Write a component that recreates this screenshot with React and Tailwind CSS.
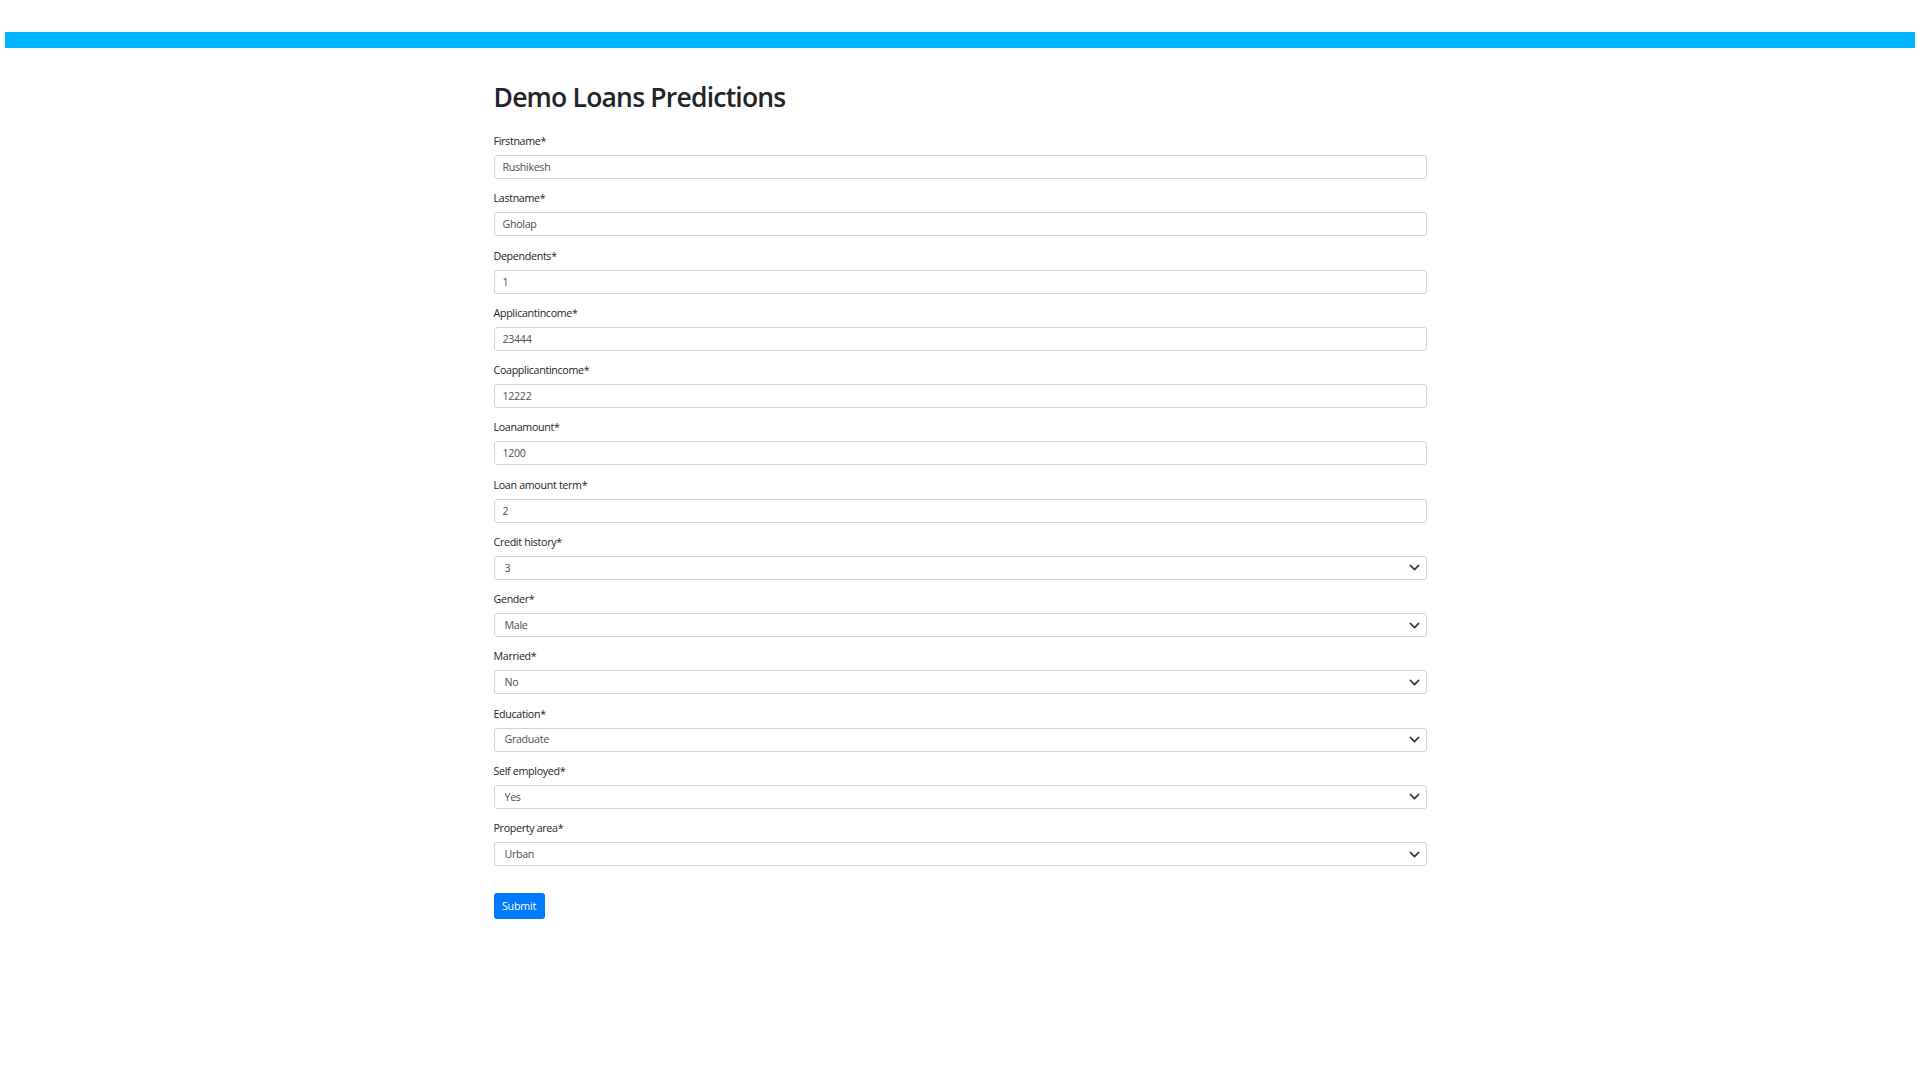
const fields = [
  { label: "Firstname*", value: "Rushikesh" },
  { label: "Lastname*", value: "Gholap" },
  { label: "Dependents*", value: "1" },
  { label: "Applicantincome*", value: "23444" },
  { label: "Coapplicantincome*", value: "12222" },
  { label: "Loanamount*", value: "1200" },
  { label: "Loan amount term*", value: "2" },
  { label: "Credit history*", value: "3", options: ["1", "2", "3"] },
  { label: "Gender*", value: "Male", options: ["Male", "Female"] },
  { label: "Married*", value: "No", options: ["Yes", "No"] },
  { label: "Education*", value: "Graduate", options: ["Graduate", "Not Graduate"] },
  { label: "Self employed*", value: "Yes", options: ["Yes", "No"] },
  { label: "Property area*", value: "Urban", options: ["Urban", "Semiurban", "Rural"] },
];

function Chevron() {
  return (
    <svg width="11" height="11" viewBox="0 0 16 16" className="shrink-0 mr-[6px]">
      <path
        d="M2 5l6 6 6-6"
        fill="none"
        stroke="#343a40"
        strokeWidth="2.4"
        strokeLinecap="round"
        strokeLinejoin="round"
      />
    </svg>
  );
}

function Field({ label, value, options }) {
  return (
    <div className="mb-[10.25px]">
      <label className="block text-[10.7px] tracking-[-0.03em] leading-4 text-[#212529] pt-[1px] mb-[6px]">
        {label}
      </label>
      {options ? (
        <div className="flex items-center h-6 border border-[#ced4da] rounded-[3px] bg-white">
          <select
            defaultValue={value}
            className="flex-1 h-full appearance-none bg-transparent pl-[10px] text-[10.7px] tracking-[-0.03em] text-[#495057] outline-none"
          >
            {options.map((o) => (
              <option key={o}>{o}</option>
            ))}
          </select>
          <Chevron />
        </div>
      ) : (
        <input
          readOnly
          value={value}
          className="block w-full h-6 border border-[#ced4da] rounded-[3px] px-2 text-[10.7px] tracking-[-0.03em] text-[#495057] outline-none"
        />
      )}
    </div>
  );
}

export default function App() {
  return (
    <div className="min-h-screen bg-white font-['Open_Sans',sans-serif] pt-8">
      <div className="h-4 mx-[5px] bg-[#00b4ff]" />

      <div className="w-[933px] mx-auto pt-[33px]">
        <h1 className="text-[26.5px] leading-8 tracking-[-0.03em] text-[#212529] font-semibold mb-[19px]">
          Demo Loans Predictions
        </h1>

        <form>
          {fields.map((f) => (
            <Field key={f.label} {...f} />
          ))}

          <button
            type="button"
            className="mt-[17px] h-[26px] w-[51px] rounded-[3px] bg-[#007bff] text-white text-[10.7px] tracking-[-0.02em]"
          >
            Submit
          </button>
        </form>
      </div>
    </div>
  );
}
